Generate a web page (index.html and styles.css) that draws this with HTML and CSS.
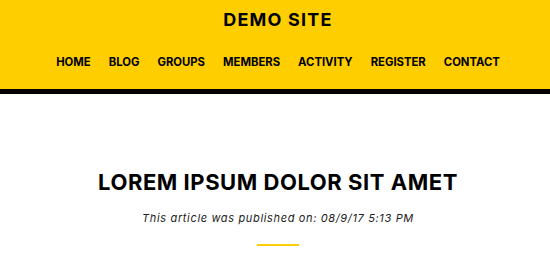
FILE: index.html
```html
<!DOCTYPE html>
<html lang="en">
<head>
    <meta charset="UTF-8">
    <title>Demo Site</title>
    <link rel="stylesheet" href="styles.css">
</head>
<body>
    <header class="site-header">
        <h1 class="site-title">DEMO SITE</h1>
        <nav class="main-nav">
            <a href="#">HOME</a>
            <a href="#">BLOG</a>
            <a href="#">GROUPS</a>
            <a href="#">MEMBERS</a>
            <a href="#">ACTIVITY</a>
            <a href="#">REGISTER</a>
            <a href="#">CONTACT</a>
        </nav>
    </header>
    <main class="article">
        <h2 class="article-title">LOREM IPSUM DOLOR SIT AMET</h2>
        <p class="article-meta">This article was published on: 08/9/17 5:13 PM</p>
        <div class="divider"></div>
    </main>
</body>
</html>
```

FILE: styles.css
```css
body {
    margin: 0;
    font-family: Inter, "Liberation Sans", sans-serif;
    background-color: #fff;
    color: #000;
}
.site-header {
    background-color: #ffce00;
    border-bottom: 5px solid #000;
    height: 89px;
    padding-left: 6px;
    text-align: center;
}
.site-title {
    margin: 0;
    padding-top: 8px;
    font-size: 18px;
    font-weight: 700;
    line-height: 24px;
    letter-spacing: 1.2px;
}
.main-nav {
    display: flex;
    justify-content: center;
    gap: 18px;
    margin-top: 22px;
}
.main-nav a {
    color: #000;
    text-decoration: none;
    font-size: 11.3px;
    font-weight: 700;
    line-height: 16px;
}
.article {
    text-align: center;
    padding-top: 73px;
    padding-left: 6px;
}
.article-title {
    margin: 0;
    font-size: 22px;
    font-weight: 700;
    line-height: 30px;
    letter-spacing: 0.55px;
}
.article-meta {
    margin: 13px 0 0;
    font-size: 11px;
    font-style: italic;
    line-height: 16px;
    letter-spacing: 0.65px;
    color: #222;
}
.divider {
    width: 42px;
    height: 2px;
    background-color: #ffce00;
    margin: 18px auto 0;
}
```
